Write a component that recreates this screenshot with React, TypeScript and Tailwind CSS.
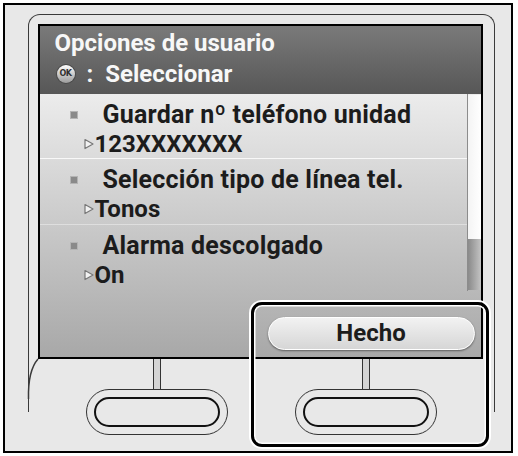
import React from 'react';

const FONT = "font-['Roboto','DejaVu_Sans',sans-serif] font-bold";

const ROWS = [
  { title: 'Guardar nº teléfono unidad', value: '123XXXXXXX', sep: 'border-b border-white/80' },
  { title: 'Selección tipo de línea tel.', value: 'Tonos', sep: 'border-b border-white/40' },
  { title: 'Alarma descolgado', value: 'On', sep: '' },
];

function Triangle() {
  return (
    <svg width="10" height="12" viewBox="0 0 10 12" className="shrink-0">
      <polygon points="1,1.5 9,6 1,10.5" fill="#f2f2f2" stroke="#777" strokeWidth="1.2" strokeLinejoin="round" />
    </svg>
  );
}

function OkIcon() {
  return (
    <div className="w-[18px] h-[18px] rounded-full bg-linear-to-b from-white to-[#9c9c9c] ring-1 ring-[#4a4a4a] flex items-center justify-center">
      <span className="text-[8px] leading-none font-bold text-[#333] font-['DejaVu_Sans',sans-serif] tracking-[-0.5px]">OK</span>
    </div>
  );
}

function SoftKey() {
  return (
    <div className="flex flex-col items-center w-[142px]">
      {/* connector */}
      <div className="w-[8px] h-[30px] border-x border-[#333] bg-[#d4d4d4]" />
      <div className="w-[142px] h-[46px] rounded-full border border-[#333] p-[7px]">
        <div className="w-full h-full rounded-full border-2 border-[#111]" />
      </div>
    </div>
  );
}

export default function App() {
  return (
    <div className="w-[518px] h-[456px] bg-white p-[3px]">
      <div className="relative w-[510px] h-[450px] border-2 border-black bg-[#e8e8e8] pt-[9px] pl-[23px]">
        {/* device frame */}
        <div className="w-[467px] h-[398px] border-x-[1.5px] border-t-[1.5px] border-[#3a3a3a] rounded-t-[12px] pt-[8.5px] pl-[8.5px]">
          {/* screen */}
          <div className="w-[445px] h-[335px] border-2 border-black flex flex-col overflow-hidden">
            {/* header */}
            <div className={`h-[68px] shrink-0 bg-linear-to-b from-[#7a7a7a] to-[#575757] pl-[15px] pt-[2px] text-[#f7f7f7] ${FONT}`}>
              <div className="text-[24px] leading-[31px] whitespace-nowrap">Opciones de usuario</div>
              <div className="flex items-center h-[31px] text-[24px] leading-[31px]">
                <div className="ml-[2px]">
                  <OkIcon />
                </div>
                <span className="ml-[12px]">:</span>
                <span className="ml-[12px]">Seleccionar</span>
              </div>
            </div>

            {/* body */}
            <div className="flex-1 flex flex-col bg-linear-to-b from-[#ececec] to-[#a8a8a8]">
              <div className="h-[197px] flex">
                <div className="flex-1 min-w-0 flex flex-col">
                  {ROWS.map((row, i) => (
                    <div key={i} className={`h-[66px] first:h-[65px] pt-[7px] text-[#1c1c1c] ${FONT} ${row.sep}`}>
                      <div className="flex items-center h-[28px] pl-[30px]">
                        <div className="w-[8px] h-[8px] bg-[#8a8a8a] border border-[#b4b4b4] mr-[25px] shrink-0" />
                        <span className="text-[25px] leading-[28px] tracking-[0.2px] whitespace-nowrap">{row.title}</span>
                      </div>
                      <div className="flex items-center h-[30px] pl-[44px]">
                        <Triangle />
                        <span className="ml-[1px] text-[24px] leading-[30px]">{row.value}</span>
                      </div>
                    </div>
                  ))}
                </div>
                {/* scrollbar */}
                <div className="w-[14px] shrink-0 pt-px flex flex-col border-l border-[#8c8c8c]">
                  <div className="h-[144px] bg-linear-to-r from-[#f4f4f4] to-white" />
                  <div className="h-[51px] bg-linear-to-r from-[#8a8a8a] to-[#c4c4c4]" />
                </div>
              </div>
              {/* bottom bar */}
              <div className="flex-1 flex justify-end items-end pr-[6px] pb-[7px]">
                <div className={`w-[207px] h-[33px] rounded-full border border-white bg-linear-to-b from-[#f2f2f2] to-[#d6d6d6] shadow-[0_1px_2px_rgba(0,0,0,0.45)] flex items-center justify-center text-[#1c1c1c] text-[24px] ${FONT}`}>
                  Hecho
                </div>
              </div>
            </div>
          </div>

          {/* soft keys */}
          <div className="flex pl-[48px] gap-[67px]">
            <SoftKey />
            <SoftKey />
          </div>
        </div>

        {/* frame curve at bottom-left of screen */}
        <svg className="absolute left-0 top-0 pointer-events-none" width="60" height="420">
          <path d="M33 354 C 26 362, 23 374, 23.5 394" fill="none" stroke="#3a3a3a" strokeWidth="1.5" />
        </svg>

        {/* highlight round the Hecho key */}
        <div className="absolute left-[246px] top-[297px] w-[238px] h-[145px] rounded-[11px] border-[3px] border-black shadow-[0_0_0_2px_#fff,inset_0_0_0_1.5px_#fff]" />
      </div>
    </div>
  );
}
